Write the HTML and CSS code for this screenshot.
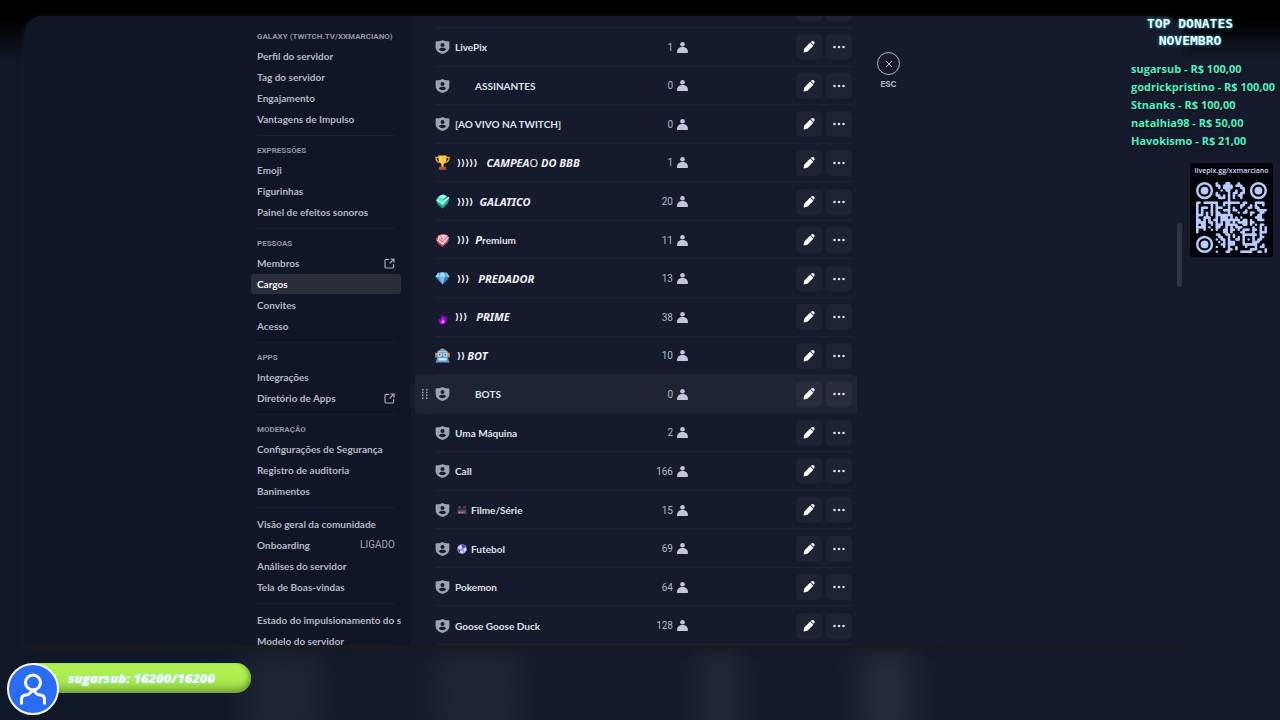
FILE: index.html
```html
<!DOCTYPE html>
<html lang="pt-BR">
<head>
<meta charset="utf-8">
<title>Cargos</title>
<link rel="stylesheet" href="styles.css">
</head>
<body>
<svg class="defs" aria-hidden="true">
  <symbol id="shield" viewBox="0 0 14 14"><path fill-rule="evenodd" d="M7 0C8.300 1 10.200 1.300 12.500 1.300c.9 0 1.400.5 1.400 1.400V7c0 3.400-3 6-6.900 7C3.100 13 .1 10.400.1 7V2.700c0-.9.5-1.400 1.400-1.400C3.800 1.300 5.700 1 7 0zM7 3a2 2 0 1 0 0 4 2 2 0 0 0 0-4zM3.300 9.300c.9 1.300 2.200 2 3.700 2s2.800-.7 3.700-2C10.200 8.200 9 7.700 7 7.700s-3.200.5-3.700 1.600z"/></symbol>
  <symbol id="person" viewBox="0 0 11 11"><circle cx="5.500" cy="2.300" r="2.300"/><path d="M0 10.300C.1 6.800 2.300 5 5.500 5s5.400 1.800 5.500 5.300c0 .4-.2.7-.6.7H.6c-.4 0-.6-.3-.6-.7z"/></symbol>
  <symbol id="pencil" viewBox="0 0 12 12"><path d="M7.200 1.600 10.400 4.800 5 10.300c-.3.3-.6.4-1 .5L1 11.400c-.3 0-.5-.1-.4-.5l.6-2.900c.1-.4.3-.8.6-1.100zM7.800 1l.5-.4c.8-.8 2-.7 2.700 0s.8 1.900 0 2.700l-.4.500z"/></symbol>
  <symbol id="dots" viewBox="0 0 12 4"><circle cx="1.500" cy="2" r="1.300"/><circle cx="6" cy="2" r="1.300"/><circle cx="10.500" cy="2" r="1.300"/></symbol>
  <symbol id="external" viewBox="0 0 11 11"><path fill="none" stroke="currentColor" stroke-width="1.200" stroke-linecap="round" d="M4.500 1.300H2.300c-.8 0-1.300.5-1.300 1.300v6.100c0 .8.5 1.300 1.300 1.300h6c.8 0 1.300-.5 1.300-1.300V6.500M6.800 1H10v3.200M9.800 1.200 6 5"/></symbol>
</svg>

<div class="backdrop" aria-hidden="true">
  <span class="smudge smudge-a"></span><span class="smudge smudge-b"></span><span class="smudge smudge-c"></span><span class="smudge smudge-d"></span>
</div>

<div class="window">
  <div class="sidebar">
    <nav class="nav">
      <section class="group">
        <h2>GALAXY (TWITCH.TV/XXMARCIANO)</h2>
        <a href="#">Perfil do servidor</a><a href="#">Tag do servidor</a><a href="#">Engajamento</a><a href="#">Vantagens de Impulso</a>
      </section>
      <section class="group">
        <h2>EXPRESSÕES</h2>
        <a href="#">Emoji</a><a href="#">Figurinhas</a><a href="#">Painel de efeitos sonoros</a>
      </section>
      <section class="group">
        <h2>PESSOAS</h2>
        <a href="#">Membros<svg class="ext"><use href="#external"/></svg></a><a href="#" class="active" aria-current="page">Cargos</a><a href="#">Convites</a><a href="#">Acesso</a>
      </section>
      <section class="group">
        <h2>APPS</h2>
        <a href="#">Integrações</a><a href="#">Diretório de Apps<svg class="ext"><use href="#external"/></svg></a>
      </section>
      <section class="group">
        <h2>MODERAÇÃO</h2>
        <a href="#">Configurações de Segurança</a><a href="#">Registro de auditoria</a><a href="#">Banimentos</a>
      </section>
      <section class="group">
        <a href="#">Visão geral da comunidade</a><a href="#">Onboarding<span class="state">LIGADO</span></a><a href="#">Análises do servidor</a><a href="#">Tela de Boas-vindas</a>
      </section>
      <section class="group">
        <a href="#">Estado do impulsionamento do servidor</a><a href="#">Modelo do servidor</a>
      </section>
    </nav>
  </div>

  <main class="main">
    <ul class="roles">
      <li class="role cut"><span class="actions"><button aria-label="Editar"></button><button aria-label="Mais"></button></span></li>
      <li class="role"><svg class="badge"><use href="#shield"/></svg><span class="name">LivePix</span><span class="count">1<svg><use href="#person"/></svg></span><span class="actions"><button aria-label="Editar"><svg class="pen"><use href="#pencil"/></svg></button><button aria-label="Mais"><svg class="more"><use href="#dots"/></svg></button></span></li>
      <li class="role"><svg class="badge"><use href="#shield"/></svg><span class="name indent">ASSINANTES</span><span class="count">0<svg><use href="#person"/></svg></span><span class="actions"><button aria-label="Editar"><svg class="pen"><use href="#pencil"/></svg></button><button aria-label="Mais"><svg class="more"><use href="#dots"/></svg></button></span></li>
      <li class="role"><svg class="badge"><use href="#shield"/></svg><span class="name">[AO VIVO NA TWITCH]</span><span class="count">0<svg><use href="#person"/></svg></span><span class="actions"><button aria-label="Editar"><svg class="pen"><use href="#pencil"/></svg></button><button aria-label="Mais"><svg class="more"><use href="#dots"/></svg></button></span></li>
      <li class="role"><svg class="emoji" viewBox="0 0 16 16"><path fill="none" stroke="#e8a52e" stroke-width="1.500" d="M4 2.500H1c0 3 1 5 4 5.500M12 2.500h3c0 3-1 5-4 5.500"/><path fill="#f9c440" d="M3.500.5h9c.2 5-.8 8-3.300 9.200V13H6.800V9.700C4.300 8.500 3.300 5.500 3.500.5z"/><path fill="#ffe08a" d="M5 1.500h1.500l.3 6C5.500 6 5 4 5 1.500z"/><path fill="#b6523a" d="M4.500 12.500h7l.8 3.200H3.700z"/></svg><span class="name"><i class="chev">⟩⟩⟩⟩⟩</i><em class="gap-l">CAMPEA<span class="plain">O</span> DO BBB</em></span><span class="count">1<svg><use href="#person"/></svg></span><span class="actions"><button aria-label="Editar"><svg class="pen"><use href="#pencil"/></svg></button><button aria-label="Mais"><svg class="more"><use href="#dots"/></svg></button></span></li>
      <li class="role"><svg class="emoji" viewBox="0 0 16 16"><path fill="#16a98c" d="M4 2.500 8.500.5l4 1.500 2.800 3-1.500 5L8 15.500 3 11.500.8 6.500z"/><path fill="#5df0cf" d="M4 2.500 8 7l6.500-3.500L9 12 2 7z"/><path fill="#a9fbe8" d="m4 2.500 4.500-2 4 1.500L8 6z"/><path fill="none" stroke="#dffff6" stroke-width="1.300" d="m2 6.500 5.500 4L15 3.500"/></svg><span class="name"><i class="chev">⟩⟩⟩⟩</i><em class="gap-s">GALATICO</em></span><span class="count">20<svg><use href="#person"/></svg></span><span class="actions"><button aria-label="Editar"><svg class="pen"><use href="#pencil"/></svg></button><button aria-label="Mais"><svg class="more"><use href="#dots"/></svg></button></span></li>
      <li class="role"><svg class="emoji" viewBox="0 0 16 16"><path fill="#b0485a" d="M4 2.500 8.500.8l4 1.200 2.800 3-1.500 5L8 15 3 11.500.8 6.500z"/><path fill="#f6c3c6" d="M3.500 3 9 1.500l4 1L14 6l-5 6.500L2.500 7z"/><path fill="none" stroke="#cf6673" stroke-width="1.100" d="m4.500 6.500 3.500 3 5-5.500M6 4l2 2.500"/><path fill="none" stroke="#fff1ee" d="m2 7.500 6 4.500 6.500-7.500"/></svg><span class="name"><i class="chev">⟩⟩⟩</i><span class="gap-s"><em>P</em>remium</span></span><span class="count">11<svg><use href="#person"/></svg></span><span class="actions"><button aria-label="Editar"><svg class="pen"><use href="#pencil"/></svg></button><button aria-label="Mais"><svg class="more"><use href="#dots"/></svg></button></span></li>
      <li class="role"><svg class="emoji" viewBox="0 0 16 16"><path fill="#4f9fdc" d="M3.500 1.500h9L15.500 6 8 14.500.5 6z"/><path fill="#a8dcf8" d="M3.500 1.500 5 6H.5zM6 1.500h4L11 6H5z"/><path fill="#7cc3ef" d="M5 6h6l-3 8.500zM12.500 1.500 11 6h4.500z"/><path fill="#2f7fc4" d="M11 6h4.500L8 14.500z"/></svg><span class="name"><i class="chev">⟩⟩⟩</i><em class="gap-l">PREDADOR</em></span><span class="count">13<svg><use href="#person"/></svg></span><span class="actions"><button aria-label="Editar"><svg class="pen"><use href="#pencil"/></svg></button><button aria-label="Mais"><svg class="more"><use href="#dots"/></svg></button></span></li>
      <li class="role"><svg class="emoji" viewBox="0 0 16 16"><path fill="#6a10b8" d="M8.500 4.500c-.5 1.500 1 2.200 2 3 .5-.8.5-1.200 1.500-1.700 0 1.700 1.500 3.200 1 5.200-.4 2.500-2.500 4.500-5 4.500s-4.500-1.500-4.500-4c0-1.500.5-2 1.500-2.500.2.500.4.8 1 1C5.500 8 6.500 5.500 8.500 4.500z"/><path fill="#c016f5" d="M8.500 7.500c.3 1.500 2.500 2.300 2.500 4.500 0 1.800-1.200 3-3 3s-3-1-3-2.800c.8.2 1.300 0 1.500-.7.200-1.500.8-2.500 2-4z"/><circle cx="8.500" cy="12.400" r="1.400" fill="#f58aff"/><path fill="#5a0f94" d="M14 1.500h1V3h-1zM4 5h1v1H4zM9 2h1v1.500H9z"/></svg><span class="name"><i class="chev flush">⟩⟩⟩</i><em class="gap-l">PRIME</em></span><span class="count">38<svg><use href="#person"/></svg></span><span class="actions"><button aria-label="Editar"><svg class="pen"><use href="#pencil"/></svg></button><button aria-label="Mais"><svg class="more"><use href="#dots"/></svg></button></span></li>
      <li class="role"><svg class="emoji" viewBox="0 0 16 16"><path fill="#d08a3c" d="M5 2.500C5.500 0 10.500 0 11 2.500zM.2 5h2v5h-2zM13.800 5h2v5h-2z"/><path fill="#5f9fcf" d="M2 5c0-2 2-3.200 6-3.200S14 3 14 5v6.500l1.500 4h-15l1.500-4z"/><path fill="#a9d4ee" d="M4 3.300h8v1H4z"/><circle cx="5" cy="7" r="2.300" fill="#e9e6f2"/><circle cx="11" cy="7" r="2.300" fill="#e9e6f2"/><circle cx="5" cy="7" r="1.200" fill="#8a4a72"/><circle cx="11" cy="7" r="1.200" fill="#8a4a72"/><rect x="3.500" y="11" width="9" height="2.300" rx="1" fill="#dcecf5"/></svg><span class="name"><i class="chev">⟩⟩</i><em>BOT</em></span><span class="count">10<svg><use href="#person"/></svg></span><span class="actions"><button aria-label="Editar"><svg class="pen"><use href="#pencil"/></svg></button><button aria-label="Mais"><svg class="more"><use href="#dots"/></svg></button></span></li>
      <li class="role hovered"><svg class="grip" viewBox="0 0 6 10"><path d="M0 0h1.500v1.500H0zM4 0h1.500v1.500H4zM0 2.800h1.500v1.500H0zM4 2.800h1.500v1.500H4zM0 5.600h1.500v1.500H0zM4 5.600h1.500v1.500H4zM0 8.400h1.500v1.500H0zM4 8.400h1.500v1.500H4z"/></svg><svg class="badge"><use href="#shield"/></svg><span class="name indent">BOTS</span><span class="count">0<svg><use href="#person"/></svg></span><span class="actions"><button aria-label="Editar"><svg class="pen"><use href="#pencil"/></svg></button><button aria-label="Mais"><svg class="more"><use href="#dots"/></svg></button></span></li>
      <li class="role"><svg class="badge"><use href="#shield"/></svg><span class="name">Uma Máquina</span><span class="count">2<svg><use href="#person"/></svg></span><span class="actions"><button aria-label="Editar"><svg class="pen"><use href="#pencil"/></svg></button><button aria-label="Mais"><svg class="more"><use href="#dots"/></svg></button></span></li>
      <li class="role"><svg class="badge"><use href="#shield"/></svg><span class="name">Call</span><span class="count">166<svg><use href="#person"/></svg></span><span class="actions"><button aria-label="Editar"><svg class="pen"><use href="#pencil"/></svg></button><button aria-label="Mais"><svg class="more"><use href="#dots"/></svg></button></span></li>
      <li class="role"><svg class="badge"><use href="#shield"/></svg><span class="name"><svg class="mini" viewBox="0 0 10 10"><path fill="#54405a" d="M1 1h3v2.500H1zM6 1h3v2.500H6zM.5 4.500h9V9h-9z"/><path fill="#8b6273" d="M1 6.500h7v1.800H1z"/><path fill="#b08a95" d="M2 7h1v1H2zM5 7h1v1H5z"/></svg>Filme/Série</span><span class="count">15<svg><use href="#person"/></svg></span><span class="actions"><button aria-label="Editar"><svg class="pen"><use href="#pencil"/></svg></button><button aria-label="Mais"><svg class="more"><use href="#dots"/></svg></button></span></li>
      <li class="role"><svg class="badge"><use href="#shield"/></svg><span class="name"><svg class="mini" viewBox="0 0 10 10"><circle cx="5" cy="5" r="4.800" fill="#8f8fe6"/><path fill="#e4e4ff" d="M1 3.500 3.500 1l1.500 2-2 2.500zM6.500 4.500 9 4l.3 2.500L7 7.500zM3 7l2.500-.5 1 2.500-2 .5z"/><path fill="#4343b4" d="m5 1 2.500 0L8 3l-1.500 1L5 3zM1 5.500 3 6l0 2L1.500 7.500z"/></svg>Futebol</span><span class="count">69<svg><use href="#person"/></svg></span><span class="actions"><button aria-label="Editar"><svg class="pen"><use href="#pencil"/></svg></button><button aria-label="Mais"><svg class="more"><use href="#dots"/></svg></button></span></li>
      <li class="role"><svg class="badge"><use href="#shield"/></svg><span class="name">Pokemon</span><span class="count">64<svg><use href="#person"/></svg></span><span class="actions"><button aria-label="Editar"><svg class="pen"><use href="#pencil"/></svg></button><button aria-label="Mais"><svg class="more"><use href="#dots"/></svg></button></span></li>
      <li class="role"><svg class="badge"><use href="#shield"/></svg><span class="name">Goose Goose Duck</span><span class="count">128<svg><use href="#person"/></svg></span><span class="actions"><button aria-label="Editar"><svg class="pen"><use href="#pencil"/></svg></button><button aria-label="Mais"><svg class="more"><use href="#dots"/></svg></button></span></li>
    </ul>
    <div class="close">
      <button aria-label="Fechar"><svg viewBox="0 0 8 8"><path d="m1 1 6 6M7 1 1 7"/></svg></button>
      <span>ESC</span>
    </div>
    <div class="scrollbar" aria-hidden="true"></div>
  </main>
</div>

<aside class="donates">
  <h1>TOP DONATES<br>NOVEMBRO</h1>
  <ol>
    <li>sugarsub - R$ 100,00</li>
    <li>godrickpristino - R$ 100,00</li>
    <li>Stnanks - R$ 100,00</li>
    <li>natalhia98 - R$ 50,00</li>
    <li>Havokismo - R$ 21,00</li>
  </ol>
</aside>

<figure class="pix">
  <figcaption>livepix.gg/xxmarciano</figcaption>
  <svg id="qr" viewBox="0 0 29 29" role="img" aria-label="QR code"></svg>
</figure>

<div class="goal">
  <div class="goal-bar">sugarsub: 16200/16200</div>
  <div class="goal-icon"><svg viewBox="0 0 28 32"><circle cx="14" cy="9.500" r="7.500"/><path d="M2.500 30v-3.500c0-3 1.800-4.500 4.500-4.500 3.500 0 4-2 7-5 3 3 3.500 5 7 5 2.700 0 4.500 1.500 4.500 4.500V30"/></svg></div>
</div>
<script src="qr.js"></script>
</body>
</html>
```

FILE: styles.css
```css
* { box-sizing: border-box; }

body {
  margin: 0;
  height: 100vh;
  min-height: 720px;
  display: flex;
  padding: 16px 98px 75px 25px;
  overflow: hidden;
  position: relative;
  background: linear-gradient(#000 0, #000 20px, transparent 60px), linear-gradient(90deg, #101727 0, #11192a 300px, #151b2d 420px);
  color: #b5b9c5;
  font-family: Lato, "Noto Sans", sans-serif;
  font-size: 10px;
}

.defs { position: absolute; width: 0; height: 0; }
h1, h2, ul, ol, figure { margin: 0; padding: 0; list-style: none; }
button { font: inherit; border: 0; padding: 0; color: inherit; }

.backdrop { position: absolute; inset: auto 0 0 0; height: 70px; }
.smudge { position: absolute; top: 0; height: 90px; background: #262c3b; filter: blur(14px); }
.smudge-a { left: 242px; width: 80px; opacity: .6; }
.smudge-b { left: 436px; width: 84px; opacity: .6; }
.smudge-c { left: 704px; width: 32px; }
.smudge-d { left: 862px; width: 50px; }

.window {
  position: relative;
  flex: 1;
  display: grid;
  grid-template-columns: minmax(386px, 1fr) 2fr;
  grid-template-rows: minmax(0, 1fr);
  border-radius: 18px 18px 6px 6px;
  overflow: hidden;
  background: #151b2d;
  box-shadow: 0 3px 7px 1px #1b1b1d;
}

.sidebar {
  background: #101625;
  display: flex;
  justify-content: flex-end;
  overflow: hidden;
  padding: 12px 10px 0 0;
}
.nav { width: 150px; }
.group { padding: 0 6px; }
.group::after {
  content: "";
  display: block;
  height: 1px;
  margin: 6px 0;
  background: #1a2030;
}
.group h2 {
  height: 18px;
  font: 700 8px/18px Roboto, sans-serif;
  color: #8f94a4;
  white-space: nowrap;
}
.group a {
  display: flex;
  align-items: center;
  justify-content: space-between;
  height: 20px;
  margin: 0 -6px 1px;
  padding: 0 0 0 6px;
  border-radius: 3px;
  overflow: hidden;
  white-space: nowrap;
  color: #b3b7c4;
  font-weight: 700;
  text-decoration: none;
}
.group a.active { background: #2a2d3a; color: #f2f3f7; }
.ext { width: 11px; height: 11px; margin-right: 6px; color: #a5aab8; }
.state { margin-right: 6px; font: 400 10px/16px Roboto, sans-serif; color: #a1a6b4; }

.main { position: relative; display: flex; align-items: flex-start; padding-left: 4px; }
.roles { width: 442px; height: 100%; display: flex; flex-direction: column; }
.role {
  position: relative;
  flex: 1;
  display: flex;
  align-items: center;
  padding: 0 5px 0 20px;
}
.role::after {
  content: "";
  position: absolute;
  inset: auto 5px 0 21px;
  height: 1px;
  background: #1d2335;
}
.role.cut { flex: none; height: 12px; align-items: flex-end; justify-content: flex-end; padding-bottom: 7px; }
.role.hovered { background: #1e2433; border-radius: 4px; }
.badge, .emoji { width: 15px; height: 15px; margin-right: 5px; flex: none; }
.badge { fill: #9aa3b0; height: 14px; }
.grip { position: absolute; left: 7px; width: 6px; height: 10px; fill: #a3a7b3; }
.name { flex: 1; display: flex; align-items: center; color: #dfe1ea; font-weight: 700; }
.name.indent { padding-left: 20px; }
.name em { font: italic 700 11px/16px "Noto Sans", sans-serif; color: #f0f1f6; }
.name em .plain { font-weight: 400; font-style: normal; }
.chev { font: normal 700 9px/16px "DejaVu Sans", sans-serif; color: #fff; padding: 0 2px; }
.chev.flush { padding-left: 0; }
.gap-s { margin-left: 4px; }
.gap-l { margin-left: 7px; }
.mini { width: 10px; height: 10px; margin: 0 4px 0 2px; }
.count { flex: none; display: flex; align-items: center; gap: 4px; color: #b3b7c4; font-family: Roboto, sans-serif; }
.count svg { width: 11px; height: 11px; fill: #c3c6d8; }
.actions { flex: none; display: flex; justify-content: flex-end; gap: 4px; width: 164px; }
.actions button {
  display: grid;
  place-items: center;
  width: 26px;
  height: 26px;
  border-radius: 5px;
  background: #1d2332;
  fill: #fff;
}
.hovered .actions button { background: #292d3b; }
.pen { width: 12px; height: 12px; }
.more { width: 12px; height: 4px; fill: #dadce4; }

.close {
  display: flex;
  flex-direction: column;
  align-items: center;
  gap: 3px;
  margin: 36px 0 0 20px;
  color: #b3b7c4;
  font: 700 8px/12px Inter, sans-serif;
}
.close button {
  display: grid;
  place-items: center;
  width: 23px;
  height: 23px;
  border: 1px solid #b0b3c2;
  border-radius: 50%;
  background: none;
}
.close svg { width: 8px; height: 8px; fill: none; stroke: #b9bccb; }
.scrollbar {
  position: absolute;
  top: 207px;
  right: 0;
  width: 5px;
  height: 64px;
  border-radius: 3px;
  background: #2e3345;
}

.donates { position: absolute; top: 15px; right: 7px; width: 142px; }
.donates h1 {
  margin: 0 24px 11px 0;
  text-align: center;
  font: 700 13px/17px "DejaVu Sans Mono", monospace;
  color: #eaffff;
  text-shadow: 0 0 3px #2fb4d0, 0 0 2px #123;
  white-space: nowrap;
}
.donates li {
  font: 700 11px/18px "Open Sans", sans-serif;
  color: #4bf5c6;
  text-shadow: 0 1px 2px #000;
  white-space: nowrap;
}

.pix {
  position: absolute;
  top: 163px;
  right: 7px;
  width: 83px;
  padding: 3px 6px 4px;
  border-radius: 2px;
  background: #02040c;
}
.pix figcaption {
  display: flex;
  justify-content: center;
  font: 600 7px/10px "Open Sans", sans-serif;
  color: #d3d9f5;
  white-space: nowrap;
}
.pix svg { display: block; width: 71px; height: 71px; margin-top: 6px; fill: #b9cbfa; }
.pix .ring { fill: none; stroke: #b9cbfa; }

.goal { position: absolute; left: 7px; bottom: 5px; width: 244px; height: 52px; }
.goal-bar {
  margin-left: 26px;
  height: 30px;
  padding-left: 35px;
  border-radius: 0 15px 15px 0;
  background: linear-gradient(#b2f552, #a8ea4e 60%, #86bd3e);
  box-shadow: inset -2px -2px 5px #6f9f33;
  font: italic 800 13px/30px "Open Sans", sans-serif;
  color: #fff;
  text-shadow: 0 0 3px #7ff5d0;
  white-space: nowrap;
}
.goal-icon {
  position: absolute;
  left: 0;
  top: 0;
  display: grid;
  place-items: center;
  width: 52px;
  height: 52px;
  border: 2px solid #fff;
  border-radius: 50%;
  background: #2a6cf6;
}
.goal-icon svg { width: 28px; height: 32px; fill: none; stroke: #fff; stroke-width: 3; stroke-linecap: square; stroke-linejoin: round; }
```

FILE: qr.js
```javascript
const rows = [
  "........#...##...#...........",
  "........##.####.###..........",
  ".........#.####...##.........",
  "..........#.##..#..#.........",
  "........#....#.##.##.........",
  "........##.#.#.#.##..........",
  ".........###.#.#..#..........",
  ".............#...............",
  "##.######..#######.##...####.",
  "#.....#.#..#.#....##..#.#..#.",
  "#.###.#.###..#.#..#..##.##...",
  "#.#...#.#..###.##...#....####",
  "#.#.#.#.##...#...#.##.##..##.",
  "###.#.#.#######.......#..##..",
  "#..###..#.###.#.#.#.....###..",
  "##.#.#.##.########.##.#..###.",
  "####.##.#.#.##.#.####.##.....",
  "#.##..#.###.#####..##.#.#.##.",
  "####.#..##..#.#.###....#..#.#",
  "#..#..#.#..##.##.#.###.##.#.#",
  "#..........##.#...##...#..###",
  "........##..##.#...######.#..",
  ".........##..#.#.#.#...#..##.",
  "........#.##.#..##.#.#.#.##..",
  ".........#.#.###...#...###...",
  "..........##.###...######..#.",
  "........#..#.#..#...#...#.##.",
  ".............##.#.....###...#",
  "........#...##....#####..##.#"
];
const ns = "http://www.w3.org/2000/svg";
const qr = document.getElementById("qr");
function add(name, attrs) {
  const el = document.createElementNS(ns, name);
  for (const key in attrs) el.setAttribute(key, attrs[key]);
  qr.appendChild(el);
}
rows.forEach((row, y) => {
  [...row].forEach((cell, x) => {
    if (cell !== "#") return;
    const right = row[x + 1] === "#";
    const below = rows[y + 1] && rows[y + 1][x] === "#";
    add("circle", { cx: x + 0.5, cy: y + 0.5, r: 0.5 });
    if (right) add("rect", { x: x + 0.5, y: y, width: 1, height: 1 });
    if (below) add("rect", { x: x, y: y + 0.5, width: 1, height: 1 });
  });
});
[[3.5, 3.5], [25.5, 3.5], [3.5, 25.5]].forEach(([cx, cy]) => {
  add("circle", { cx, cy, r: 3, "stroke-width": 1, class: "ring" });
  add("circle", { cx, cy, r: 1.6 });
});
```
